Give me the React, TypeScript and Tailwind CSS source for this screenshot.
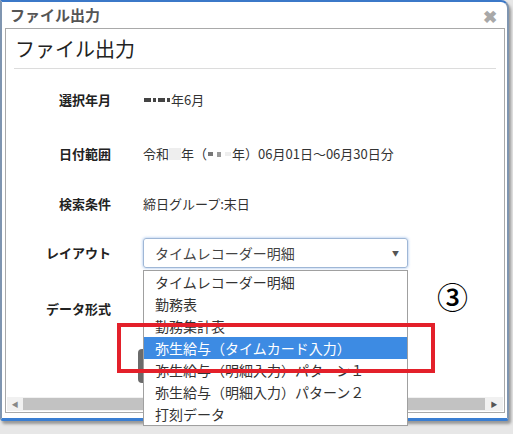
import React from 'react';

const font = { fontFamily: '"Noto Sans CJK JP", "Liberation Sans", sans-serif' };

const layouts = [
  'タイムレコーダー明細',
  '勤務表',
  '勤務集計表',
  '弥生給与（タイムカード入力）',
  '弥生給与（明細入力）パターン１',
  '弥生給与（明細入力）パターン２',
  '打刻データ',
];

function Blur({ w, dark }: { w: number; dark?: boolean }) {
  // masked characters in the screenshot
  return (
    <span
      className={`inline-block h-[4px] align-middle mx-[1px] ${dark ? 'bg-[#444]' : 'bg-[#ddd]'}`}
      style={{ width: w }}
    />
  );
}

export default function App() {
  return (
    <div className="relative w-[513px] h-[434px] overflow-hidden bg-[#e7e7e7]" style={font}>
      {/* Dialog window */}
      <div className="relative w-[509px] h-[421px] bg-white border-x-2 border-t-2 border-b-[3px] border-x-[#7f95b0] border-t-[#3b78c8] border-b-[#3a7ed2] rounded-tr-[8px] rounded-b-[3px] shadow-[2px_3px_3px_rgba(0,0,0,0.35)] flex flex-col">
        <div className="h-[26px] flex items-center pl-[8px] text-[15px] font-bold text-[#555]">
          ファイル出力
        </div>
        <span className="absolute right-[10px] top-[5px] text-[17px] font-bold text-[#a8a8a8] leading-none">✖</span>

        {/* Inner panel */}
        <div className="ml-[3px] w-[500px] h-[385px] border border-[#a9a9a9] flex flex-col">
          <div className="mx-[8px] h-[40px] border-b border-[#dcdcdc] flex items-center pl-[1px] text-[20px] text-[#222]">
            ファイル出力
          </div>

          <div className="flex items-center h-[20px] mt-[21px] text-[13px] text-[#333]">
            <div className="w-[105px] text-right font-bold text-[#222]">選択年月</div>
            <div className="ml-[32px] flex items-center">
              <Blur w={7} dark />
              <Blur w={3} dark />
              <Blur w={7} dark />
              <Blur w={3} dark />
              <span>年6月</span>
            </div>
          </div>

          <div className="flex items-center h-[20px] mt-[34px] text-[13px] text-[#333]">
            <div className="w-[105px] text-right font-bold text-[#222]">日付範囲</div>
            <div className="ml-[32px] flex items-center">
              <span>令和</span>
              <span className="inline-block w-[12px] h-[12px] bg-[#eee]" />
              <span>年（</span>
              <span className="inline-block w-[5px] h-[4px] bg-[#777] mx-[1px]" />
              <span className="inline-block w-[4px] h-[5px] bg-[#999] mx-[3px]" />
              <span className="inline-block w-[6px] h-[4px] bg-[#eee] mx-[1px]" />
              <span>年）06月01日～06月30日分</span>
            </div>
          </div>

          <div className="flex items-center h-[20px] mt-[30px] text-[13px] text-[#333]">
            <div className="w-[105px] text-right font-bold text-[#222]">検索条件</div>
            <div className="ml-[32px]">締日グループ:末日</div>
          </div>

          <div className="flex items-center h-[30px] mt-[24px] text-[13px] text-[#333]">
            <div className="w-[105px] text-right font-bold text-[#222]">レイアウト</div>
            <div className="ml-[32px] w-[265px] h-[30px] border border-[#9fb7d6] rounded-[3px] shadow-[0_0_3px_rgba(80,140,220,0.6)] flex items-center justify-between pl-[11px] pr-[8px] text-[14px] text-[#444]">
              <span>タイムレコーダー明細</span>
              <span className="text-[7px] text-[#555]">▼</span>
            </div>
          </div>

          <div className="flex items-center h-[20px] mt-[31px] text-[13px]">
            <div className="w-[105px] text-right font-bold text-[#222]">データ形式</div>
          </div>

          <div className="ml-[132px] mt-[30px] w-[60px] h-[34px] rounded-[4px] bg-[#6b6b6b]" />

          {/* Horizontal scrollbar */}
          <div className="mt-auto mb-[1px] mx-[1px] h-[14px] flex items-center bg-[#f1f1f1]">
            <span className="w-[16px] text-center text-[7px] text-[#888]">◀</span>
            <div className="flex-1 h-[12px] bg-[#c2c2c2]" />
            <span className="w-[18px] text-center text-[7px] text-[#555]">▶</span>
          </div>
        </div>
      </div>

      {/* Open select list */}
      <div className="absolute left-[143px] top-[270px] w-[265px] bg-white border border-[#a0a0a0] text-[14px] text-[#333]">
        {layouts.map((item, i) => (
          <div
            key={item}
            className={`h-[22px] flex items-center pl-[11px] ${i === 3 ? 'bg-[#3d8be3] text-white' : ''}`}
          >
            {item}
          </div>
        ))}
      </div>

      {/* Annotation */}
      <div className="absolute left-[117px] top-[323px] w-[318px] h-[50px] border-4 border-[#e3202a]" />
      <div className="absolute left-[437px] top-[280px] text-[31px] font-medium leading-none text-black">③</div>
    </div>
  );
}
